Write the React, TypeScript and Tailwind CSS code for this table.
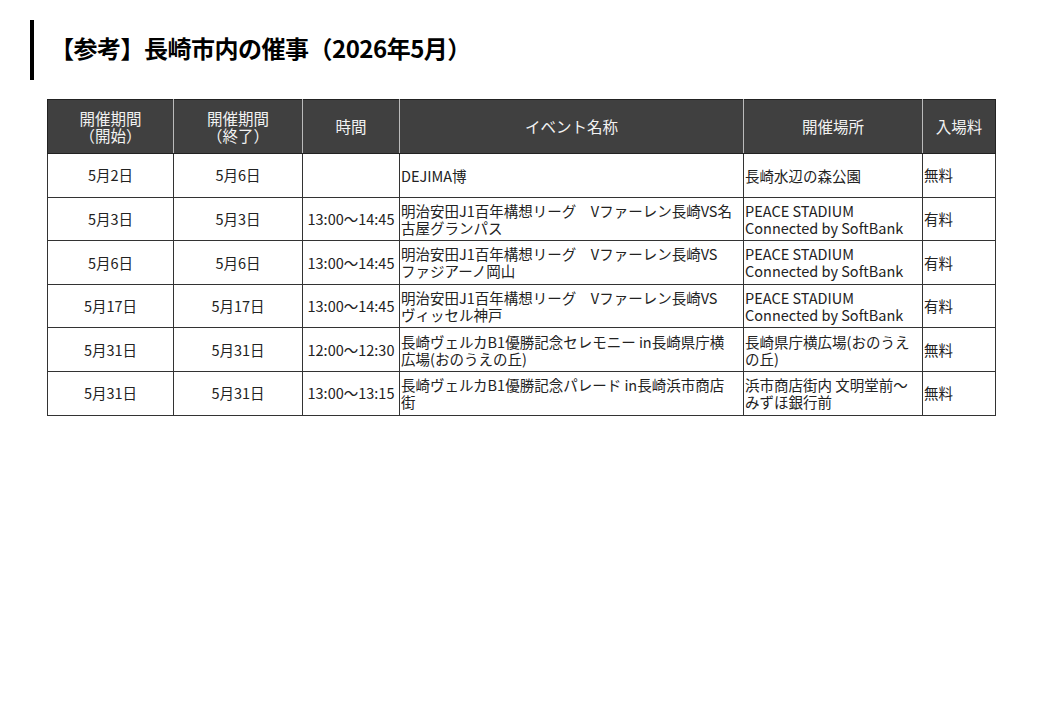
import React from "react";

type Row = { s: string; e: string; t: string; n: React.ReactNode; p: React.ReactNode; f: string };

const rows: Row[] = [
  { s: "5月2日", e: "5月6日", t: "", n: "DEJIMA博", p: "長崎水辺の森公園", f: "無料" },
  { s: "5月3日", e: "5月3日", t: "13:00～14:45", n: <>明治安田J1百年構想リーグ　Vファーレン長崎VS名<br />古屋グランパス</>, p: <>PEACE STADIUM<br />Connected by SoftBank</>, f: "有料" },
  { s: "5月6日", e: "5月6日", t: "13:00～14:45", n: <>明治安田J1百年構想リーグ　Vファーレン長崎VS<br />ファジアーノ岡山</>, p: <>PEACE STADIUM<br />Connected by SoftBank</>, f: "有料" },
  { s: "5月17日", e: "5月17日", t: "13:00～14:45", n: <>明治安田J1百年構想リーグ　Vファーレン長崎VS<br />ヴィッセル神戸</>, p: <>PEACE STADIUM<br />Connected by SoftBank</>, f: "有料" },
  { s: "5月31日", e: "5月31日", t: "12:00～12:30", n: <>長崎ヴェルカB1優勝記念セレモニー in長崎県庁横<br />広場(おのうえの丘)</>, p: <>長崎県庁横広場(おのうえ<br />の丘)</>, f: "無料" },
  { s: "5月31日", e: "5月31日", t: "13:00～13:15", n: <>長崎ヴェルカB1優勝記念パレード in長崎浜市商店<br />街</>, p: <>浜市商店街内 文明堂前～<br />みずほ銀行前</>, f: "無料" },
];

export default function App() {
  return (
    <div
      className="w-[1040px] h-[720px] bg-white text-[#222] relative"
      style={{ fontFamily: '"Noto Sans CJK JP", "Noto Sans", sans-serif' }}
    >
      <div className="pt-[20px] pl-[30px] flex items-center">
        <div className="w-[4px] h-[60px] bg-black" />
        <div className="ml-[16px] text-[24px] font-bold text-black leading-none -mt-[4px] tracking-[-0.5px]">
          【参考】長崎市内の催事（2026年5月）
        </div>
      </div>
      <table className="ml-[47px] mt-[19px] border-collapse table-fixed w-[948px] text-[14.5px]">
        <colgroup>
          <col className="w-[126px]" />
          <col className="w-[129px]" />
          <col className="w-[97px]" />
          <col className="w-[344px]" />
          <col className="w-[179px]" />
          <col className="w-[73px]" />
        </colgroup>
        <thead>
          <tr className="h-[54px] bg-[#404040] text-[#f2f2f2] text-[15.5px]">
            <th className="font-normal border border-[#222] border-r-[#bbb] leading-[17px]">開催期間<br />（開始）</th>
            <th className="font-normal border border-[#222] border-x-[#bbb] leading-[17px]">開催期間<br />（終了）</th>
            <th className="font-normal border border-[#222] border-x-[#bbb]">時間</th>
            <th className="font-normal border border-[#222] border-x-[#bbb]">イベント名称</th>
            <th className="font-normal border border-[#222] border-x-[#bbb]">開催場所</th>
            <th className="font-normal border border-[#222] border-l-[#bbb]">入場料</th>
          </tr>
        </thead>
        <tbody>
          {rows.map((r, i) => (
            <tr key={i} className="h-[43.6px]">
              <td className="border border-[#333] text-center align-middle">{r.s}</td>
              <td className="border border-[#333] text-center align-middle">{r.e}</td>
              <td className="border border-[#333] text-center align-middle whitespace-nowrap px-0">{r.t}</td>
              <td className="border border-[#333] text-left align-middle leading-[17px] pl-[1px] pr-0 whitespace-nowrap">{r.n}</td>
              <td className="border border-[#333] text-left align-middle leading-[17px] pl-[1px] pr-0 whitespace-nowrap">{r.p}</td>
              <td className="border border-[#333] text-left align-middle pl-[1px]">{r.f}</td>
            </tr>
          ))}
        </tbody>
      </table>
    </div>
  );
}
